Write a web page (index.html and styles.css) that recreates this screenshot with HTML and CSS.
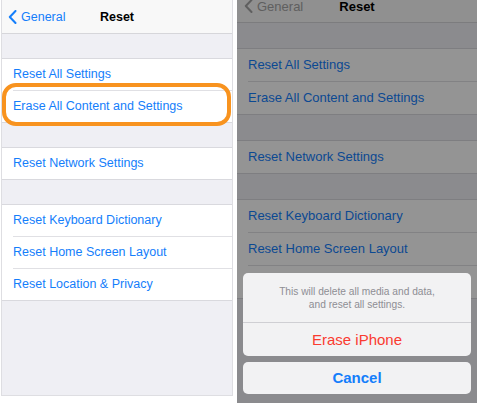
FILE: index.html
```html
<!DOCTYPE html>
<html lang="en">
<head>
    <meta charset="UTF-8">
    <meta name="viewport" content="width=device-width, initial-scale=1.0">
    <title>Reset</title>
    <link rel="stylesheet" href="styles.css">
</head>
<body>
    <div class="screens">
        <div class="phone">
            <div class="navbar">
                <span class="back">
                    <svg width="9" height="14" viewBox="0 0 9 14"><path d="M7.5 1 L1.8 7 L7.5 13" fill="none" stroke="currentColor" stroke-width="2" stroke-linecap="round" stroke-linejoin="round"/></svg>
                    General
                </span>
                <span class="title">Reset</span>
            </div>
            <div class="group">
                <div class="row">Reset All Settings</div>
                <div class="row">Erase All Content and Settings</div>
            </div>
            <div class="group">
                <div class="row">Reset Network Settings</div>
            </div>
            <div class="group">
                <div class="row">Reset Keyboard Dictionary</div>
                <div class="row">Reset Home Screen Layout</div>
                <div class="row">Reset Location &amp; Privacy</div>
            </div>
            <div class="highlight"></div>
        </div>

        <div class="phone phone-dim">
            <div class="navbar">
                <span class="back">
                    <svg width="9" height="14" viewBox="0 0 9 14"><path d="M7.5 1 L1.8 7 L7.5 13" fill="none" stroke="currentColor" stroke-width="2" stroke-linecap="round" stroke-linejoin="round"/></svg>
                    General
                </span>
                <span class="title">Reset</span>
            </div>
            <div class="group">
                <div class="row">Reset All Settings</div>
                <div class="row">Erase All Content and Settings</div>
            </div>
            <div class="group">
                <div class="row">Reset Network Settings</div>
            </div>
            <div class="group">
                <div class="row">Reset Keyboard Dictionary</div>
                <div class="row">Reset Home Screen Layout</div>
                <div class="row">Reset Location &amp; Privacy</div>
            </div>
            <div class="dimmer"></div>
            <div class="sheet">
                <div class="sheet-box">
                    <p class="sheet-msg">This will delete all media and data,<br>and reset all settings.</p>
                    <div class="sheet-btn destructive">Erase iPhone</div>
                </div>
                <div class="sheet-box sheet-btn cancel">Cancel</div>
            </div>
        </div>
    </div>
</body>
</html>
```

FILE: styles.css
```css
body {
    margin: 0;
    background-color: #fff;
    font-family: "Liberation Sans", Arial, sans-serif;
}
.screens {
    display: flex;
    align-items: flex-start;
    gap: 4px;
    padding-left: 1px;
}
.phone {
    position: relative;
    width: 232px;
    height: 396px;
    box-sizing: border-box;
    background-color: #efeff4;
    border: 1px solid #dedee2;
    border-top: none;
    overflow: hidden;
}
.navbar {
    position: relative;
    height: 33px;
    display: flex;
    align-items: center;
    justify-content: center;
    background-color: #f8f8f8;
    border-bottom: 1px solid #d6d6da;
}
.back {
    position: absolute;
    left: 6px;
    top: 0;
    bottom: 0;
    display: flex;
    align-items: center;
    gap: 4px;
    color: #147efb;
    font-size: 12.5px;
}
.title {
    font-weight: bold;
    font-size: 12.5px;
    color: #000;
}
.group {
    margin-top: 24px;
    background-color: #fff;
    border-top: 1px solid #d9d9de;
    border-bottom: 1px solid #d9d9de;
}
.row {
    height: 31px;
    line-height: 31px;
    margin-left: 11px;
    font-size: 12.5px;
    color: #147efb;
}
.row + .row {
    border-top: 1px solid #e0e0e4;
}
.highlight {
    position: absolute;
    left: 0;
    top: 83px;
    width: 229px;
    height: 43px;
    box-sizing: border-box;
    border: 4px solid #f8931f;
    border-radius: 14px;
}

/* right screen: dimmed behind the action sheet */
.phone-dim {
    width: 240px;
    height: 403px;
    border: none;
}
.phone-dim .navbar {
    height: 32px;
    margin-top: -10px;
}
.phone-dim .back {
    left: 7px;
    color: #a4a4a4;
    font-size: 13px;
}
.phone-dim .title {
    font-size: 13px;
}
.phone-dim .group {
    margin-top: 25px;
}
.phone-dim .row {
    height: 32px;
    line-height: 32px;
    font-size: 13px;
}
.dimmer {
    position: absolute;
    inset: 0;
    background-color: rgba(0, 0, 0, 0.42);
}
.sheet {
    position: absolute;
    left: 6px;
    right: 6px;
    bottom: 9px;
    display: flex;
    flex-direction: column;
    gap: 6px;
}
.sheet-box {
    background-color: #f2f2f3;
    border-radius: 5px;
    overflow: hidden;
}
.sheet-msg {
    margin: 0;
    padding: 12px 10px 11px;
    line-height: 13px;
    font-size: 10.2px;
    color: #8e8e93;
    text-align: center;
    border-bottom: 1px solid #cfcfd3;
}
.sheet-btn {
    height: 33px;
    line-height: 33px;
    text-align: center;
    font-size: 15px;
}
.destructive {
    color: #fa3b30;
}
.cancel {
    height: 32px;
    line-height: 32px;
    font-weight: bold;
    color: #157efb;
}
```
